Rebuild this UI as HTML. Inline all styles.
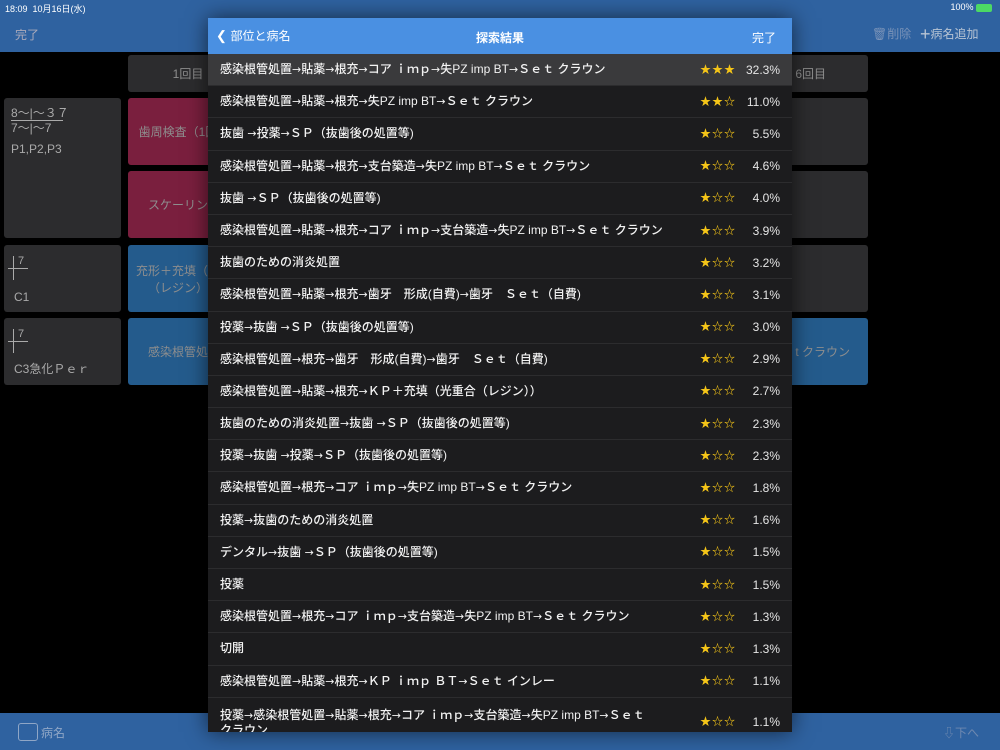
<!DOCTYPE html>
<html><head><meta charset="utf-8"><style>
*{margin:0;padding:0;box-sizing:border-box}
body{width:1000px;height:750px;background:#000;position:relative;overflow:hidden;font-family:"Liberation Sans","Noto Sans CJK JP",sans-serif;color:#fff}
.abs{position:absolute}
.top{left:0;top:0;width:1000px;height:52px;background:#2f62a0}
.bot{left:0;top:713px;width:1000px;height:37px;background:#2f62a0}
.cell{position:absolute;border-radius:3px;background:#2c2c2e;color:#8e8e8e;font-size:12px;display:flex;align-items:center;justify-content:center;text-align:center}
.pink{background:#7a1f3e}
.blue{background:#245b8c}
.pop{left:208px;top:18px;width:584px;height:714px;background:#1c1c1e;overflow:hidden;box-shadow:0 0 20px rgba(0,0,0,.6)}
.hdr{height:36px;background:#4a90e2;position:relative;font-size:12px}
.row{height:32.2px;line-height:31px;border-bottom:1px solid #2c2c2e;position:relative;font-size:12px;font-weight:500;padding-left:12px;color:#f2f2f2;white-space:nowrap}
.row.h{background:#3a3a3c}
.row b{font-weight:normal;font-family:"DejaVu Sans",sans-serif;font-size:11px}
.st{position:absolute;left:492px;color:#f5c518;font-size:11px;letter-spacing:1px;top:50%;transform:translateY(-50%);line-height:14px}
.pc{position:absolute;right:12px;font-size:12px;color:#e5e5e5;top:50%;transform:translateY(-50%);line-height:14px}
</style></head><body>
<div class="abs top"></div>
<div class="abs" style="left:5px;top:2px;font-size:9px;color:#fff">18:09 &nbsp;10月16日(水)</div>
<div class="abs" style="right:8px;top:2px;font-size:9px;color:#fff">100% <span style="display:inline-block;width:16px;height:8px;background:#4cd964;border-radius:2px;vertical-align:middle"></span></div>
<div class="abs" style="left:15px;top:26px;font-size:12px;color:#aab">完了</div>
<div class="abs" style="left:872px;top:25px;font-size:12px;color:#7a93b8">🗑削除</div>
<div class="abs" style="left:920px;top:24px;font-size:12px;color:#b8c4d4"><span style="font-size:18px;vertical-align:-2px">+</span>病名追加</div>

<div class="cell" style="left:128px;top:55px;width:120px;height:37px">1回目</div>
<div class="cell" style="left:760px;top:55px;width:108px;height:37px;justify-content:flex-end;padding-right:42px">6回目</div>
<div class="cell" style="left:4px;top:98px;width:117px;height:140px;align-items:flex-start;justify-content:flex-start;padding:8px 7px;text-align:left;font-size:12px;line-height:15px;color:#aaa">
<div>8～|～３７<br><span style="border-top:1px solid #aaa">7～|～7　</span><br><div style="margin-top:6px">P1,P2,P3</div></div></div>
<div class="cell pink" style="left:128px;top:98px;width:100px;height:67px">歯周検査（1回</div>
<div class="cell pink" style="left:128px;top:171px;width:100px;height:67px">スケーリン</div>
<div class="cell" style="left:4px;top:245px;width:117px;height:67px;align-items:flex-end;justify-content:flex-start;padding:8px 10px;color:#aaa">C1</div>
<div class="cell" style="left:4px;top:318px;width:117px;height:67px;align-items:flex-end;justify-content:flex-start;padding:8px 10px;color:#aaa">C3急化Ｐｅｒ</div>
<div class="abs" style="left:18px;top:255px;font-size:11px;color:#aaa">7</div>
<div class="abs" style="left:13px;top:256px;width:1px;height:24px;background:#aaa"></div>
<div class="abs" style="left:8px;top:268px;width:20px;height:1px;background:#aaa"></div>
<div class="abs" style="left:18px;top:328px;font-size:11px;color:#aaa">7</div>
<div class="abs" style="left:13px;top:329px;width:1px;height:24px;background:#aaa"></div>
<div class="abs" style="left:8px;top:341px;width:20px;height:1px;background:#aaa"></div>
<div class="cell blue" style="left:128px;top:245px;width:100px;height:67px">充形＋充填（光<br>（レジン）</div>
<div class="cell blue" style="left:128px;top:318px;width:100px;height:67px">感染根管処</div>
<div class="cell" style="left:760px;top:98px;width:108px;height:67px"></div>
<div class="cell" style="left:760px;top:171px;width:108px;height:67px"></div>
<div class="cell" style="left:760px;top:245px;width:108px;height:67px"></div>
<div class="cell blue" style="left:760px;top:318px;width:108px;height:67px;justify-content:flex-end;padding-right:18px">t クラウン</div>

<div class="abs bot"></div>
<div class="abs" style="left:18px;top:723px;width:20px;height:18px;border:1.5px solid #8fa6c6;border-radius:3px"></div>
<div class="abs" style="left:41px;top:724px;font-size:12px;color:#8fa6c6">病名</div>
<div class="abs" style="left:943px;top:724px;font-size:12px;color:#6f89b0">⇩下へ</div>

<div class="abs pop">
<div class="hdr">
<div class="abs" style="left:8px;top:9px;font-size:13px">❮ <span style="font-size:12px">部位と病名</span></div>
<div class="abs" style="left:0;width:584px;top:11px;text-align:center;font-size:12px;font-weight:bold">探索結果</div>
<div class="abs" style="right:16px;top:11px;font-size:12px">完了</div>
</div>
<div class="row h">感染根管処置<b>→</b>貼薬<b>→</b>根充<b>→</b>コア ｉｍｐ<b>→</b>失PZ imp BT<b>→</b>Ｓｅｔ クラウン<span class="st">★★★</span><span class="pc">32.3%</span></div>
<div class="row">感染根管処置<b>→</b>貼薬<b>→</b>根充<b>→</b>失PZ imp BT<b>→</b>Ｓｅｔ クラウン<span class="st">★★☆</span><span class="pc">11.0%</span></div>
<div class="row">抜歯 <b>→</b>投薬<b>→</b>ＳＰ（抜歯後の処置等)<span class="st">★☆☆</span><span class="pc">5.5%</span></div>
<div class="row">感染根管処置<b>→</b>貼薬<b>→</b>根充<b>→</b>支台築造<b>→</b>失PZ imp BT<b>→</b>Ｓｅｔ クラウン<span class="st">★☆☆</span><span class="pc">4.6%</span></div>
<div class="row">抜歯 <b>→</b>ＳＰ（抜歯後の処置等)<span class="st">★☆☆</span><span class="pc">4.0%</span></div>
<div class="row">感染根管処置<b>→</b>貼薬<b>→</b>根充<b>→</b>コア ｉｍｐ<b>→</b>支台築造<b>→</b>失PZ imp BT<b>→</b>Ｓｅｔ クラウン<span class="st">★☆☆</span><span class="pc">3.9%</span></div>
<div class="row">抜歯のための消炎処置<span class="st">★☆☆</span><span class="pc">3.2%</span></div>
<div class="row">感染根管処置<b>→</b>貼薬<b>→</b>根充<b>→</b>歯牙　形成(自費)<b>→</b>歯牙　Ｓｅｔ（自費)<span class="st">★☆☆</span><span class="pc">3.1%</span></div>
<div class="row">投薬<b>→</b>抜歯 <b>→</b>ＳＰ（抜歯後の処置等)<span class="st">★☆☆</span><span class="pc">3.0%</span></div>
<div class="row">感染根管処置<b>→</b>根充<b>→</b>歯牙　形成(自費)<b>→</b>歯牙　Ｓｅｔ（自費)<span class="st">★☆☆</span><span class="pc">2.9%</span></div>
<div class="row">感染根管処置<b>→</b>貼薬<b>→</b>根充<b>→</b>ＫＰ＋充填（光重合（レジン））<span class="st">★☆☆</span><span class="pc">2.7%</span></div>
<div class="row">抜歯のための消炎処置<b>→</b>抜歯 <b>→</b>ＳＰ（抜歯後の処置等)<span class="st">★☆☆</span><span class="pc">2.3%</span></div>
<div class="row">投薬<b>→</b>抜歯 <b>→</b>投薬<b>→</b>ＳＰ（抜歯後の処置等)<span class="st">★☆☆</span><span class="pc">2.3%</span></div>
<div class="row">感染根管処置<b>→</b>根充<b>→</b>コア ｉｍｐ<b>→</b>失PZ imp BT<b>→</b>Ｓｅｔ クラウン<span class="st">★☆☆</span><span class="pc">1.8%</span></div>
<div class="row">投薬<b>→</b>抜歯のための消炎処置<span class="st">★☆☆</span><span class="pc">1.6%</span></div>
<div class="row">デンタル<b>→</b>抜歯 <b>→</b>ＳＰ（抜歯後の処置等)<span class="st">★☆☆</span><span class="pc">1.5%</span></div>
<div class="row">投薬<span class="st">★☆☆</span><span class="pc">1.5%</span></div>
<div class="row">感染根管処置<b>→</b>根充<b>→</b>コア ｉｍｐ<b>→</b>支台築造<b>→</b>失PZ imp BT<b>→</b>Ｓｅｔ クラウン<span class="st">★☆☆</span><span class="pc">1.3%</span></div>
<div class="row">切開<span class="st">★☆☆</span><span class="pc">1.3%</span></div>
<div class="row">感染根管処置<b>→</b>貼薬<b>→</b>根充<b>→</b>ＫＰ ｉｍｐ ＢＴ<b>→</b>Ｓｅｔ インレー<span class="st">★☆☆</span><span class="pc">1.1%</span></div>
<div class="row" style="height:40px;padding-top:10px;line-height:14px">投薬<b>→</b>感染根管処置<b>→</b>貼薬<b>→</b>根充<b>→</b>コア ｉｍｐ<b>→</b>支台築造<b>→</b>失PZ imp BT<b>→</b>Ｓｅｔ<br>クラウン<span class="st" style="top:24px">★☆☆</span><span class="pc" style="top:24px">1.1%</span></div>
</div>
</body></html>
